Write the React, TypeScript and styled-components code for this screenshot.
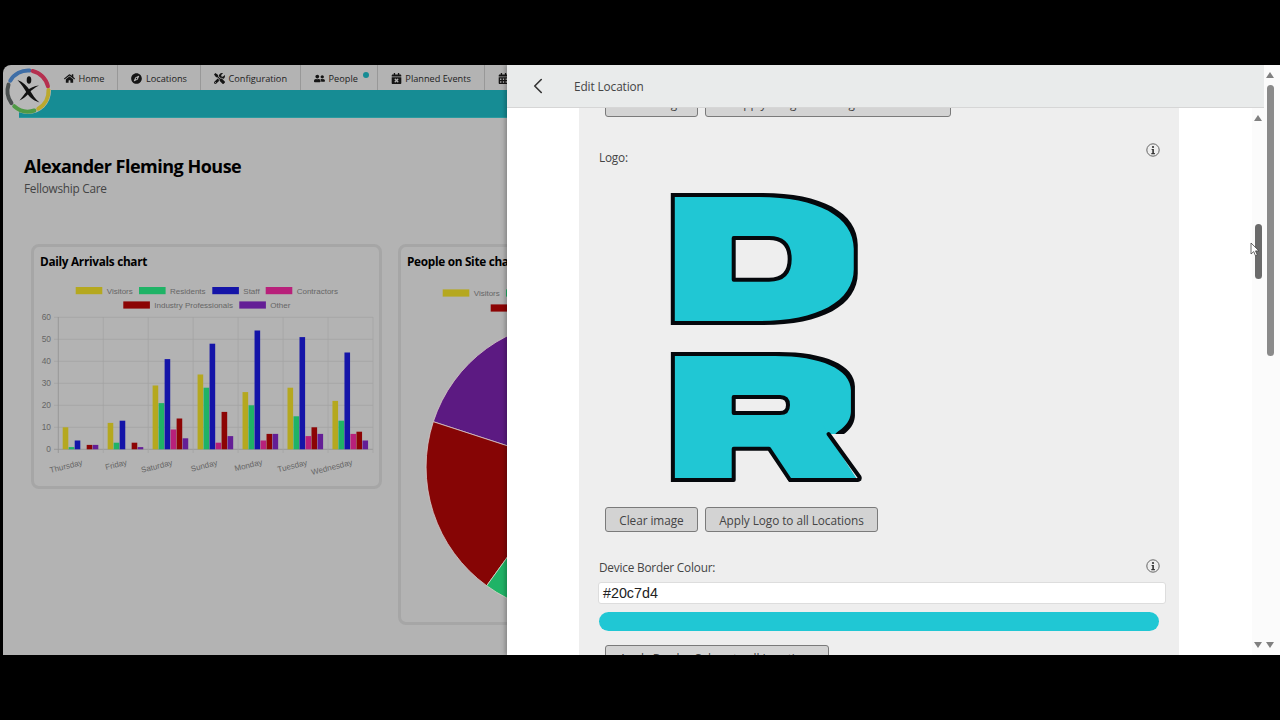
import React from 'react';
import styled, { createGlobalStyle } from 'styled-components';
import { FaHome, FaCompass, FaTools, FaUserFriends, FaCalendarTimes, FaCalendarAlt } from 'react-icons/fa';
import { ChevronLeft } from 'lucide-react';

const Global = createGlobalStyle`
  html, body { margin: 0; padding: 0; background: #000; }
  body { font-family: "Open Sans", "Liberation Sans", sans-serif; overflow: hidden; }
  * { box-sizing: border-box; }
`;

const Page = styled.div`
  height: 720px;
  display: flex;
  align-items: center;
  background: #000;
`;
const Frame = styled.div`
  width: 1280px;
  height: 590px;
  padding-left: 3px;
  display: flex;
`;
const Backdrop = styled.section`
  width: 504px;
  flex-shrink: 0;
  position: relative;
  overflow: hidden;
  background: #b3b3b3;
  border-top-left-radius: 8px;
`;
const TabRow = styled.nav`
  height: 25px;
  margin-left: 48px;
  display: flex;
  white-space: nowrap;
`;
const Tab = styled.div<{ $pr?: number }>`
  position: relative;
  display: flex;
  align-items: center;
  gap: 3.5px;
  padding: 1px ${p => p.$pr ?? 13}px 0 13px;
  flex-shrink: 0;
  font-size: 9.2px;
  font-weight: 500;
  color: #222;
  border-right: 1px solid #989898;
  svg { font-size: 11px; color: #151515; }
`;
const Dot = styled.span`
  position: absolute;
  right: 8px;
  top: 7px;
  width: 6px;
  height: 6px;
  border-radius: 50%;
  background: #168c94;
`;
const Band = styled.div`
  height: 28px;
  margin-left: 16px;
  background: #168c94;
  border-bottom: 1px solid #2b9a9f;
`;
const LogoMark = styled.svg`
  position: absolute;
  left: 0;
  top: 1px;
  width: 50px;
  height: 50px;
`;
const Heading = styled.header`
  padding: 36px 0 0 21px;
`;
const Title = styled.h1`
  margin: 0;
  font-size: 18px;
  line-height: 25px;
  font-weight: 700;
  letter-spacing: -0.5px;
  color: #000;
  white-space: nowrap;
`;
const Subtitle = styled.p`
  margin: 1px 0 0;
  font-size: 11.8px;
  line-height: 17px;
  letter-spacing: -0.25px;
  color: #444;
`;
const Cards = styled.div`
  display: flex;
  gap: 16px;
  margin-top: 47px;
  padding-left: 28px;
  align-items: flex-start;
`;
const Card = styled.article<{ $h: number }>`
  width: 351px;
  height: ${p => p.$h}px;
  flex-shrink: 0;
  border: 3px solid #a6a6a6;
  border-radius: 8px;
  background: #b3b3b3;
`;
const CardTitle = styled.h2`
  margin: 0;
  padding: 5px 0 0 6px;
  font-size: 11.8px;
  line-height: 18px;
  font-weight: 700;
  letter-spacing: -0.3px;
  color: #000;
  white-space: nowrap;
`;
const ChartSvg = styled.svg`
  display: block;
  font-family: "Liberation Sans", Arial, sans-serif;
`;

const Drawer = styled.section`
  flex: 1;
  display: flex;
  background: #fff;
  box-shadow: -2px 0 4px rgba(0, 0, 0, 0.25);
  position: relative;
  z-index: 1;
`;
const DrawerMain = styled.div`
  flex: 1;
  min-width: 0;
  display: flex;
  flex-direction: column;
`;
const DrawerHeader = styled.header`
  height: 43px;
  flex-shrink: 0;
  display: flex;
  align-items: center;
  padding-left: 18px;
  gap: 23px;
  background: #e9ebeb;
  border-bottom: 1px solid #d6d6d6;
  color: #444;
  font-size: 11.8px;
  letter-spacing: -0.1px;
`;
const DrawerBody = styled.div`
  flex: 1;
  min-height: 0;
  display: flex;
  overflow: hidden;
  padding-left: 72px;
`;
const Panel = styled.div`
  width: 600px;
  flex-shrink: 0;
  background: #eee;
  overflow: hidden;
`;
const PanelInner = styled.div`
  margin-top: -16px;
`;
const Buttons = styled.div<{ $top?: number }>`
  display: flex;
  gap: 7px;
  padding-left: 26px;
  margin-top: ${p => p.$top ?? 0}px;
`;
const Button = styled.button<{ $w?: number; $raised?: boolean }>`
  height: 25px;
  ${p => (p.$w ? `width: ${p.$w}px;` : '')}
  padding: 0 13.3px ${p => (p.$raised ? 4 : 0)}px;
  flex-shrink: 0;
  font-family: "Open Sans", sans-serif;
  font-size: 11.8px;
  letter-spacing: -0.06px;
  color: #444;
  background: #d3d3d3;
  border: 1.5px solid #7a7a7a;
  border-radius: 3px;
  white-space: nowrap;
`;
const FieldRow = styled.div<{ $top: number; $h: number }>`
  display: flex;
  justify-content: space-between;
  align-items: flex-end;
  height: ${p => p.$h}px;
  margin-top: ${p => p.$top}px;
  padding: 0 19px 0 20px;
`;
const FieldLabel = styled.label`
  font-size: 11.8px;
  line-height: 16px;
  letter-spacing: -0.2px;
  color: #444;
`;
const InfoIcon = styled.svg`
  width: 14px;
  height: 14px;
  align-self: flex-start;
`;
const LogoImage = styled.svg`
  display: block;
  width: 210px;
  height: 340px;
  margin: 2px 0 0 86px;
  font-family: Inter, "Liberation Sans", sans-serif;
`;
const ColourValue = styled.div`
  width: 568px;
  height: 22px;
  margin: 7px 0 0 19px;
  padding-left: 4px;
  display: flex;
  align-items: center;
  background: #fff;
  border: 1px solid #ddd;
  border-radius: 3px;
  font-family: "Liberation Sans", Arial, sans-serif;
  font-size: 14.3px;
  color: #222;
`;
const ColourBar = styled.div<{ $c: string }>`
  width: 560px;
  height: 19px;
  margin: 8px 0 0 20px;
  border-radius: 10px;
  background: ${p => p.$c};
`;
const BodyGap = styled.div`
  flex: 1;
`;
const Bar = styled.div<{ $w: number; $pr?: number }>`
  width: ${p => p.$w}px;
  flex-shrink: 0;
  display: flex;
  flex-direction: column;
  align-items: center;
  padding: 7px ${p => p.$pr ?? 0}px 0 0;
  background: #fbfbfb;
`;
const Arrow = styled.span<{ $down?: boolean }>`
  width: 0;
  height: 0;
  flex-shrink: 0;
  border-left: 4.5px solid transparent;
  border-right: 4.5px solid transparent;
  ${p => (p.$down
    ? 'border-top: 6px solid #808080; margin-top: auto; margin-bottom: 7px;'
    : 'border-bottom: 6px solid #808080;')}
`;
const Thumb = styled.span<{ $top: number; $h: number; $c: string }>`
  width: 7px;
  height: ${p => p.$h}px;
  margin-top: ${p => p.$top}px;
  flex-shrink: 0;
  border-radius: 4px;
  background: ${p => p.$c};
`;
const Cursor = styled.svg`
  position: absolute;
  left: 743px;
  top: 177px;
  width: 10px;
  height: 15px;
`;

const COLORS = ['#b5a81f', '#1fb366', '#1414a8', '#b8207a', '#8c0404', '#641e96'];
const DATA: [string, number[], number, number][] = [
  ['Thursday', [10, 1, 4, 0, 2, 2], 66, 466],
  ['Friday', [12, 3, 13, 0, 3, 1], 116, 464.5],
  ['Saturday', [29, 21, 41, 9, 14, 5], 156.7, 466],
  ['Sunday', [34, 28, 48, 3, 17, 6], 204, 465.5],
  ['Monday', [26, 20, 54, 4, 7, 7], 248.3, 465],
  ['Tuesday', [28, 15, 51, 6, 10, 7], 292.3, 465.7],
  ['Wednesday', [22, 13, 44, 7, 8, 4], 331.7, 467],
];
const Legend = ({ x, y, c, t }: { x: number; y: number; c: string; t: string }) => (
  <g>
    <rect x={x} y={y - 3.6} width={26.6} height={7.2} fill={c} />
    <text x={x + 31} y={y + 3} fontSize={8} fill="#666">{t}</text>
  </g>
);
const BarChart = () => {
  const y0 = 449.3;
  const unit = 2.2;
  return (
    <ChartSvg width={345} height={216} viewBox="34 270 345 216">
      <Legend x={75.7} y={290.6} c={COLORS[0]} t="Visitors" />
      <Legend x={139} y={290.6} c={COLORS[1]} t="Residents" />
      <Legend x={212.3} y={290.6} c={COLORS[2]} t="Staff" />
      <Legend x={265.7} y={290.6} c={COLORS[3]} t="Contractors" />
      <Legend x={123.3} y={305} c={COLORS[4]} t="Industry Professionals" />
      <Legend x={239.3} y={305} c={COLORS[5]} t="Other" />
      {[0, 10, 20, 30, 40, 50, 60].map(v => (
        <g key={v}>
          <line x1={54} x2={373} y1={y0 - v * unit} y2={y0 - v * unit} stroke={v === 0 ? '#909090' : '#a4a4a4'} strokeWidth={0.8} />
          <text x={51} y={y0 - v * unit + 2.5} fontSize={8.4} fill="#666" textAnchor="end">{v}</text>
        </g>
      ))}
      {[0, 1, 2, 3, 4, 5, 6, 7].map(i => (
        <line key={i} x1={58.3 + i * 44.96} x2={58.3 + i * 44.96} y1={317} y2={453} stroke={i === 0 ? '#909090' : '#a4a4a4'} strokeWidth={0.8} />
      ))}
      {DATA.map(([name, vals, lx, ly], i) => (
        <g key={name}>
          {vals.map((v, j) => v > 0 && (
            <rect key={j} x={62.7 + i * 44.96 + j * 6} y={y0 - v * unit} width={5.6} height={v * unit} fill={COLORS[j]} />
          ))}
          <text x={lx} y={ly + 3} fontSize={8} fill="#666" textAnchor="middle" transform={`rotate(-14 ${lx} ${ly})`}>{name}</text>
        </g>
      ))}
    </ChartSvg>
  );
};
const wedge = (cx: number, cy: number, r: number, a: [number, number], b: [number, number], large = 0) =>
  `M${cx} ${cy}L${a[0]} ${a[1]}A${r} ${r} 0 ${large} 0 ${b[0]} ${b[1]}Z`;
const PieChart = () => {
  const cx = 572.4, cy = 467, r = 146.4;
  const p1: [number, number] = [433.3, 421.7];
  const p2: [number, number] = [486.7, 585.7];
  const pTop: [number, number] = [cx, cy - r];
  const pBot: [number, number] = [cx, cy + r];
  return (
    <ChartSvg width={345} height={352} viewBox="401 270 345 352">
      <Legend x={442.7} y={293} c={COLORS[0]} t="Visitors" />
      <Legend x={506} y={293} c={COLORS[1]} t="Residents" />
      <Legend x={490.7} y={308} c={COLORS[4]} t="Industry Professionals" />
      <path d={wedge(cx, cy, r, pTop, p1)} fill="#5c1a82" stroke="#d8c8c8" strokeWidth={0.8} />
      <path d={wedge(cx, cy, r, p1, p2)} fill="#860505" stroke="#d8c8c8" strokeWidth={0.8} />
      <path d={wedge(cx, cy, r, p2, pBot)} fill="#1fb366" stroke="#d8d8c8" strokeWidth={0.8} />
    </ChartSvg>
  );
};

const arc = (r: number, a0: number, a1: number) => {
  const rad = (d: number) => (d * Math.PI) / 180;
  const pt = (d: number) => `${(25 + r * Math.cos(rad(d))).toFixed(2)} ${(25 + r * Math.sin(rad(d))).toFixed(2)}`;
  return `M${pt(a0)}A${r} ${r} 0 0 1 ${pt(a1)}`;
};
const Logo = () => (
  <LogoMark viewBox="0 0 50 50">
    <circle cx="25" cy="25" r="23" fill="#b8b8b8" />
    <g fill="none" strokeWidth="4" strokeLinecap="round">
      <path d={arc(20.5, -150, -85)} stroke="#3f6ea6" />
      <path d={arc(20.5, -77, -13)} stroke="#b5304f" />
      <path d={arc(20.5, -3, 60)} stroke="#bba92f" />
      <path d={arc(20.5, 72, 132)} stroke="#4f9a45" />
      <path d={arc(20.5, 144, 198)} stroke="#4a4f4f" />
    </g>
    <ellipse cx="26" cy="14" rx="2.3" ry="3.8" fill="#111" />
    <path d="M14.5 14C20 16 24 20 27 24.5C29.5 28.5 32 33 36.5 36.5C31.5 35 27 32 23.5 26.5C21 22 18 18 14.5 14Z" fill="#111" />
    <path d="M36 19.5C31.5 20 27 21.5 24 25C21 28.5 19 31.5 16.5 34.5C20.5 32.5 23.5 30 26 27C28.5 24 32 21.5 36 19.5Z" fill="#111" />
  </LogoMark>
);
const Info = () => (
  <InfoIcon viewBox="0 0 14 14">
    <circle cx="7" cy="7" r="6.2" fill="none" stroke="#666" strokeWidth="1" />
    <circle cx="7" cy="4" r="1.1" fill="#333" />
    <path d="M5.6 6h2.3v4h1v1.2H5.3V10h1V7.1h-.7z" fill="#333" />
  </InfoIcon>
);
const LOGO_FILL = '#20c7d4';
const LOGO_INK = '#05080c';
const PANEL_BG = '#eee';
const BrandImage = () => (
  <LogoImage viewBox="0 0 210 340">
    <defs>
      <filter id="brand-outline" filterUnits="userSpaceOnUse" x="0" y="0" width="210" height="340" colorInterpolationFilters="sRGB">
        <feMorphology in="SourceAlpha" operator="dilate" radius="9.5 14" result="outer" />
        <feFlood floodColor={LOGO_INK} />
        <feComposite in2="outer" operator="in" result="blackLayer" />
        <feMorphology in="SourceAlpha" operator="dilate" radius="5.5 10" result="inner" />
        <feFlood floodColor={LOGO_FILL} />
        <feComposite in2="inner" operator="in" result="tealLayer" />
        <feMerge>
          <feMergeNode in="blackLayer" />
          <feMergeNode in="tealLayer" />
        </feMerge>
      </filter>
    </defs>
    <g filter="url(#brand-outline)">
      <text fontSize="143" fontWeight="900" transform="translate(3.6 144) scale(1.82 1)">D</text>
      <text fontSize="143" fontWeight="900" transform="translate(2.7 301) scale(1.965 0.98)">R</text>
    </g>
    <rect x="66" y="268" width="46" height="12" fill={LOGO_FILL} />
    <path d="M158 258H178L166 272Z" fill={LOGO_FILL} />
    <g stroke={LOGO_INK} strokeWidth="4" strokeLinejoin="round" strokeLinecap="round">
      {/* squarer counters of the heavy letterforms */}
      <path d="M68.7 71H104Q124.7 71 124.7 92Q124.7 112.7 104 112.7H68.7Z" fill={PANEL_BG} />
      <path d="M68.7 230H115Q123 230 123 238Q123 246 115 246H68.7Z" fill={PANEL_BG} />
      {/* gap between the stem and the leg of the R */}
      <path d="M68.7 318V281.7H104L126 318Z" fill={PANEL_BG} stroke="none" />
      <path d="M68.7 313V281.7H104L125 313" fill="none" />
      {/* outer edge of the R's leg */}
      <path d="M163 267L210 267V320H197Z" fill={PANEL_BG} stroke="none" />
      <path d="M163.5 267L194.5 310Q196 313 192 313" fill="none" />
    </g>
  </LogoImage>
);

export default function App() {
  return (
    <Page>
      <Global />
      <Frame>
        <Backdrop>
          <TabRow>
            <Tab><FaHome />Home</Tab>
            <Tab><FaCompass />Locations</Tab>
            <Tab><FaTools />Configuration</Tab>
            <Tab $pr={19}><FaUserFriends />People<Dot /></Tab>
            <Tab><FaCalendarTimes />Planned Events</Tab>
            <Tab><FaCalendarAlt />Calendar</Tab>
          </TabRow>
          <Band />
          <Logo />
          <Heading>
            <Title>Alexander Fleming House</Title>
            <Subtitle>Fellowship Care</Subtitle>
          </Heading>
          <Cards>
            <Card $h={245}>
              <CardTitle>Daily Arrivals chart</CardTitle>
              <BarChart />
            </Card>
            <Card $h={381}>
              <CardTitle>People on Site chart</CardTitle>
              <PieChart />
            </Card>
          </Cards>
        </Backdrop>
        <Drawer>
          <DrawerMain>
            <DrawerHeader>
              <ChevronLeft size={26} strokeWidth={1.5} color="#333" />
              Edit Location
            </DrawerHeader>
            <DrawerBody>
              <Panel>
                <PanelInner>
                  <Buttons>
                    <Button $raised>Clear image</Button>
                    <Button $raised $w={246}>Apply Image to all Login Locations</Button>
                  </Buttons>
                  <FieldRow $top={26} $h={22}>
                    <FieldLabel>Logo:</FieldLabel>
                    <Info />
                  </FieldRow>
                  <BrandImage />
                  <Buttons>
                    <Button>Clear image</Button>
                    <Button>Apply Logo to all Locations</Button>
                  </Buttons>
                  <FieldRow $top={27} $h={16}>
                    <FieldLabel>Device Border Colour:</FieldLabel>
                    <Info />
                  </FieldRow>
                  <ColourValue>#20c7d4</ColourValue>
                  <ColourBar $c={LOGO_FILL} />
                  <Buttons $top={14}>
                    <Button>Apply Border Colour to all Locations</Button>
                  </Buttons>
                </PanelInner>
              </Panel>
              <BodyGap />
              <Bar $w={12}>
                <Arrow />
                <Thumb $top={103} $h={55} $c="#6b6b6b" />
                <Arrow $down />
              </Bar>
            </DrawerBody>
          </DrawerMain>
          <Bar $w={16} $pr={4}>
            <Arrow />
            <Thumb $top={7} $h={271} $c="#8a8a8a" />
            <Arrow $down />
          </Bar>
          <Cursor viewBox="0 0 10 15">
            <path d="M1 1v11l2.7-2.4 1.8 4.2 1.8-.8-1.8-4.1H9z" fill="#fff" stroke="#444" strokeWidth="0.8" />
          </Cursor>
        </Drawer>
      </Frame>
    </Page>
  );
}
